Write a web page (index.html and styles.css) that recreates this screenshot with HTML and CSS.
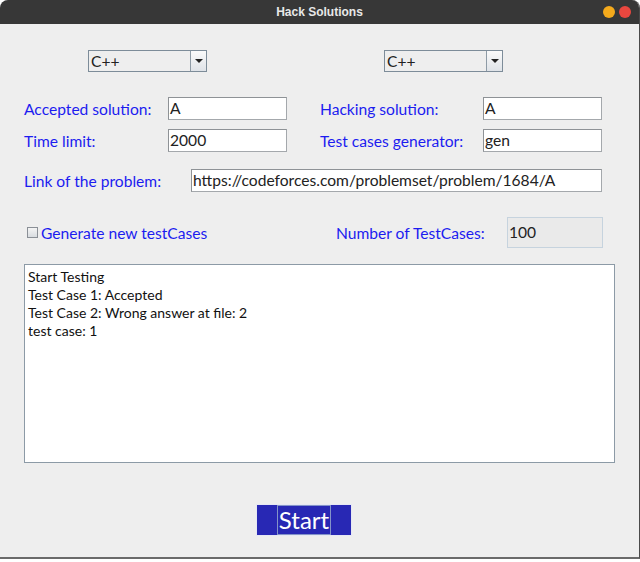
FILE: index.html
```html
<!DOCTYPE html>
<html>
<head>
<meta charset="utf-8">
<link rel="stylesheet" href="styles.css">
</head>
<body>
<div class="window">
  <div class="titlebar">
    <span class="title">Hack Solutions</span>
    <div class="controls">
      <span class="dot min"></span>
      <span class="dot close"></span>
    </div>
  </div>
  <div class="content">
    <div class="row combos">
      <div class="combo c1"><span class="combo-text">C++</span><span class="combo-btn"><span class="tri"></span></span></div>
      <div class="combo c2"><span class="combo-text">C++</span><span class="combo-btn"><span class="tri"></span></span></div>
    </div>
    <div class="row r1">
      <span class="label l1">Accepted solution:</span>
      <span class="field">A</span>
      <span class="label l2">Hacking solution:</span>
      <span class="field">A</span>
    </div>
    <div class="row r2">
      <span class="label l1">Time limit:</span>
      <span class="field">2000</span>
      <span class="label l2">Test cases generator:</span>
      <span class="field">gen</span>
    </div>
    <div class="row r3">
      <span class="label l3">Link of the problem:</span>
      <span class="field wide">https://codeforces.com/problemset/problem/1684/A</span>
    </div>
    <div class="row r4">
      <span class="check"></span>
      <span class="label l4">Generate new testCases</span>
      <span class="label l5">Number of TestCases:</span>
      <span class="field disabled">100</span>
    </div>
    <div class="output">
      <div>Start Testing</div>
      <div>Test Case 1: Accepted</div>
      <div>Test Case 2: Wrong answer at file: 2</div>
      <div>test case: 1</div>
    </div>
    <div class="row actions">
      <button class="start"><span class="focus">Start</span></button>
    </div>
  </div>
</div>
</body>
</html>
```
FILE: styles.css
```css
html, body {
  margin: 0;
  padding: 0;
  background: #ffffff;
}
.window {
  width: 640px;
  height: 559px;
  box-sizing: border-box;
  background: #eeeeee;
  border-right: 1px solid #4a4a4a;
  border-bottom: 2px solid #6a6a6a;
  border-radius: 8px 8px 0 0;
  overflow: hidden;
  font-family: Lato, "Liberation Sans", sans-serif;
}
.titlebar {
  height: 24px;
  background: #373737;
  display: flex;
  align-items: center;
  justify-content: center;
  position: relative;
}
.title {
  color: #e8e8e8;
  font-family: "Liberation Sans", sans-serif;
  font-weight: bold;
  font-size: 12px;
}
.controls {
  position: absolute;
  right: 8px;
  top: 6px;
  display: flex;
  gap: 4px;
}
.dot {
  width: 12px;
  height: 12px;
  border-radius: 50%;
  display: block;
}
.min { background: #f4aa1c; }
.close { background: #e9473f; }
.content {
  display: flex;
  flex-direction: column;
  padding-left: 24px;
}
.row {
  display: flex;
  align-items: center;
}
.combos {
  margin-top: 26px;
  height: 22px;
}
.combo {
  width: 119px;
  height: 22px;
  box-sizing: border-box;
  border: 1px solid #7d8c99;
  background: #eeeeee;
  display: flex;
  font-size: 15.6px;
  color: #222;
}
.c1 { margin-left: 64px; }
.c2 { margin-left: 177px; }
.combo-text {
  flex: 1;
  padding-left: 2px;
  line-height: 20px;
  border-right: 1px solid #8e9ba6;
}
.combo-btn {
  width: 15px;
  background: linear-gradient(#fafafa, #dfe3e8);
  display: flex;
  align-items: center;
  justify-content: center;
}
.tri {
  width: 0;
  height: 0;
  border-left: 4px solid transparent;
  border-right: 4px solid transparent;
  border-top: 4px solid #222;
}
.label {
  color: #1c1cf0;
  font-size: 15.6px;
}
.field {
  width: 119px;
  height: 23px;
  box-sizing: border-box;
  background: #ffffff;
  border: 1px solid #a4a8ac;
  border-top-color: #8e9296;
  border-left-color: #8e9296;
  font-size: 15.6px;
  color: #222;
  padding-left: 1px;
  line-height: 21px;
  white-space: nowrap;
  overflow: hidden;
}
.r1 { margin-top: 25px; }
.r2 { margin-top: 9px; }
.l1 { width: 144px; }
.l2 { width: 163px; margin-left: 33px; }
.r3 { margin-top: 17px; }
.l3 { width: 167px; }
.field.wide { width: 411px; }
.r4 { margin-top: 25px; height: 31px; }
.check {
  width: 9px;
  height: 9px;
  border: 1px solid #8a8f96;
  background: linear-gradient(#f4f4f4, #d8dce0);
  margin-left: 3px;
  margin-right: 3px;
}
.l4 { width: 295px; }
.l5 { width: 171px; }
.field.disabled {
  width: 96px;
  height: 31px;
  background: #eaeaea;
  border: 1px solid #c6d3de;
  line-height: 29px;
}
.output {
  margin-top: 16px;
  width: 591px;
  height: 199px;
  box-sizing: border-box;
  background: #ffffff;
  border: 1px solid #8c9aa6;
  padding: 3px 3px;
  font-size: 14px;
  line-height: 18px;
  color: #111;
}
.actions {
  margin-top: 41px;
  padding-left: 232px;
}
.start {
  width: 96px;
  height: 32px;
  margin: 0;
  padding: 0;
  box-sizing: border-box;
  background: #2828b4;
  border: 1px solid #e6e8f4;
  display: flex;
  justify-content: center;
  align-items: stretch;
  font-family: Lato, "Liberation Sans", sans-serif;
}
.focus {
  border: 1px solid #8494c8;
  color: #ffffff;
  font-size: 24px;
  line-height: 28px;
  padding: 0 1px;
}
```
